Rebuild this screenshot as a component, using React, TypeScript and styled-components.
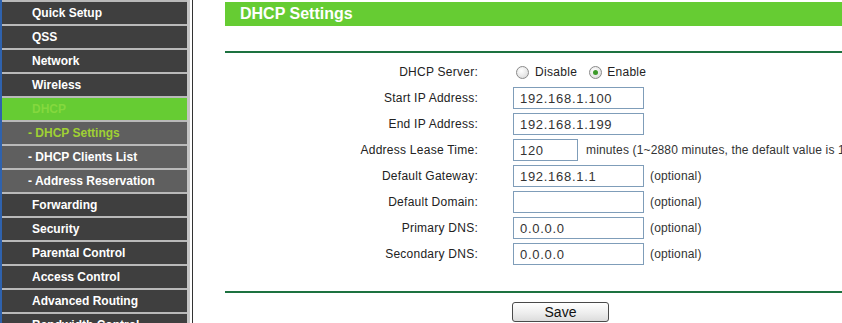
import React from "react";
import styled, { createGlobalStyle } from "styled-components";

const Global = createGlobalStyle`
  html, body { margin: 0; padding: 0; background: #fff; overflow: hidden; height: 323px; }
  body { font-family: "Liberation Sans", Arial, sans-serif; }
`;

const Layout = styled.div`
  display: flex;
  align-items: stretch;
  height: 323px;
  overflow: hidden;
`;

const Sidebar = styled.nav`
  flex: 0 0 auto;
  width: 185px;
  border-left: 2px solid #2f62ad;
  padding-right: 3px;
  margin-right: 2px;
  background: #c4c4c4;
  display: flex;
  flex-direction: column;
`;

const MenuItem = styled.div<{ $sub?: boolean; $active?: boolean; $current?: boolean }>`
  flex: 0 0 auto;
  height: 22px;
  border-top: 2px solid #b9b9b9;
  display: flex;
  align-items: center;
  padding-left: ${(p) => (p.$sub ? "26px" : "30px")};
  background: ${(p) => (p.$active ? "#66cc33" : p.$sub ? "#5f5f5f" : "#3f3f3f")};
  color: ${(p) => (p.$active ? "#84d83e" : p.$current ? "#9fd133" : "#ffffff")};
  font: bold 12px "Liberation Sans", Arial, sans-serif;
  white-space: nowrap;
`;

const Content = styled.main`
  flex: 1 1 auto;
  min-width: 0;
  border-left: 1px solid #333;
  padding: 2px 0 0 32px;
  overflow: hidden;
`;

const Inner = styled.div`
  width: 760px;
  display: flex;
  flex-direction: column;
`;

const TitleBar = styled.h1`
  margin: 0;
  height: 24px;
  background: #66cc33;
  color: #fff;
  font: bold 16px "Liberation Sans", Arial, sans-serif;
  display: flex;
  align-items: center;
  padding-left: 15px;
`;

const Rule = styled.hr<{ $top: number }>`
  margin: ${(p) => p.$top}px 0 0 0;
  border: 0;
  height: 2px;
  background: #1d7240;
`;

const Form = styled.div`
  margin-top: 6px;
  display: grid;
  grid-template-columns: 253px auto;
  grid-auto-rows: 26px;
  column-gap: 35px;
  align-items: center;
  color: #222;
  font-size: 12px;
`;

const Label = styled.div`
  text-align: right;
  letter-spacing: 0.25px;
  white-space: nowrap;
`;

const Value = styled.div`
  display: flex;
  align-items: center;
  white-space: nowrap;
`;

const Field = styled.div<{ $w: number }>`
  box-sizing: border-box;
  width: ${(p) => p.$w}px;
  height: 22px;
  border: 1px solid #7f9db9;
  background: #fff;
  padding: 0 6px;
  display: flex;
  align-items: center;
  font-size: 13px;
  letter-spacing: 0.7px;
  color: #333;
`;

const Note = styled.span<{ $gap: number }>`
  margin-left: ${(p) => p.$gap}px;
  color: #333;
  font-size: 12px;
  letter-spacing: 0.15px;
`;

const RadioGroup = styled.label`
  display: flex;
  align-items: center;
  margin-left: 3px;
`;

const RadioCircle = styled.span<{ $checked?: boolean }>`
  box-sizing: border-box;
  width: 13px;
  height: 13px;
  border-radius: 50%;
  border: 1px solid #8a8a8a;
  background: radial-gradient(circle at 40% 35%, #ffffff 0%, #e6e6e6 60%, #cfcfcf 100%);
  display: flex;
  align-items: center;
  justify-content: center;
  &::after {
    content: "";
    width: 5px;
    height: 5px;
    border-radius: 50%;
    background: ${(p) => (p.$checked ? "#3c9a2a" : "transparent")};
  }
`;

const RadioText = styled.span<{ $gap: number; $after: number }>`
  margin-left: ${(p) => p.$gap}px;
  margin-right: ${(p) => p.$after}px;
  font-size: 12px;
  letter-spacing: 0.3px;
`;

const ButtonRow = styled.div`
  padding-left: 287px;
  margin-top: 9px;
`;

const SaveButton = styled.button`
  box-sizing: border-box;
  width: 97px;
  height: 20px;
  border: 1px solid #4a4a4a;
  border-radius: 3px;
  background: linear-gradient(#ffffff, #ececec 60%, #dcdcdc);
  font: 14px "Liberation Sans", Arial, sans-serif;
  color: #111;
  padding: 0;
`;

const menu: { label: string; sub?: boolean; active?: boolean; current?: boolean }[] = [
  { label: "Quick Setup" },
  { label: "QSS" },
  { label: "Network" },
  { label: "Wireless" },
  { label: "DHCP", active: true },
  { label: "- DHCP Settings", sub: true, current: true },
  { label: "- DHCP Clients List", sub: true },
  { label: "- Address Reservation", sub: true },
  { label: "Forwarding" },
  { label: "Security" },
  { label: "Parental Control" },
  { label: "Access Control" },
  { label: "Advanced Routing" },
  { label: "Bandwidth Control" },
  { label: "IP & MAC Binding" },
];

const fields: { label: string; value: string; width: number; note?: string; gap?: number }[] = [
  { label: "Start IP Address:", value: "192.168.1.100", width: 131 },
  { label: "End IP Address:", value: "192.168.1.199", width: 131 },
  {
    label: "Address Lease Time:",
    value: "120",
    width: 65,
    note: "minutes (1~2880 minutes, the default value is 120)",
    gap: 8,
  },
  { label: "Default Gateway:", value: "192.168.1.1", width: 131, note: "(optional)", gap: 6 },
  { label: "Default Domain:", value: "", width: 131, note: "(optional)", gap: 6 },
  { label: "Primary DNS:", value: "0.0.0.0", width: 131, note: "(optional)", gap: 6 },
  { label: "Secondary DNS:", value: "0.0.0.0", width: 131, note: "(optional)", gap: 6 },
];

export default function App() {
  return (
    <>
      <Global />
      <Layout>
        <Sidebar>
          {menu.map((m) => (
            <MenuItem key={m.label} $sub={m.sub} $active={m.active} $current={m.current}>
              {m.label}
            </MenuItem>
          ))}
        </Sidebar>
        <Content>
          <Inner>
            <TitleBar>DHCP Settings</TitleBar>
            <Rule $top={25} />
            <Form>
              <Label>DHCP Server:</Label>
              <Value>
                <RadioGroup>
                  <RadioCircle />
                  <RadioText $gap={6} $after={9}>Disable</RadioText>
                </RadioGroup>
                <RadioGroup>
                  <RadioCircle $checked />
                  <RadioText $gap={5} $after={0}>Enable</RadioText>
                </RadioGroup>
              </Value>
              {fields.map((f) => (
                <React.Fragment key={f.label}>
                  <Label>{f.label}</Label>
                  <Value>
                    <Field $w={f.width}>{f.value}</Field>
                    {f.note && <Note $gap={f.gap ?? 6}>{f.note}</Note>}
                  </Value>
                </React.Fragment>
              ))}
            </Form>
            <Rule $top={24} />
            <ButtonRow>
              <SaveButton>Save</SaveButton>
            </ButtonRow>
          </Inner>
        </Content>
      </Layout>
    </>
  );
}
